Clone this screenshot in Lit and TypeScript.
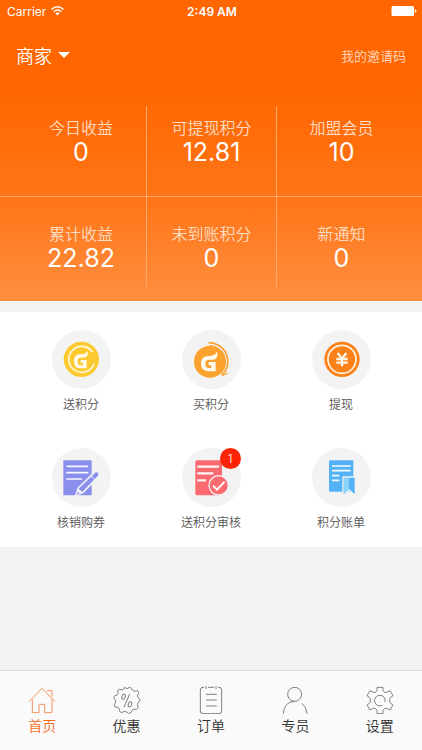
import { LitElement, html, svg, css, nothing, TemplateResult } from "lit";
import { customElement } from "lit/decorators.js";
import { classMap } from "lit/directives/class-map.js";

interface Stat { label: string; value: string; }
interface Action { label: string; box: string; art: TemplateResult; badge?: number; }
interface Tab { label: string; box: string; art: TemplateResult; active?: boolean; }

const STATS: Stat[][] = [
  [
    { label: "今日收益", value: "0" },
    { label: "可提现积分", value: "12.81" },
    { label: "加盟会员", value: "10" },
  ],
  [
    { label: "累计收益", value: "22.82" },
    { label: "未到账积分", value: "0" },
    { label: "新通知", value: "0" },
  ],
];

const ACTIONS: Action[] = [
  {
    label: "送积分",
    box: "35 30 177 177",
    art: svg`
      <circle cx="123" cy="118" r="53" fill="#fcc92f"/>
      <path d="M156 95A39 39 0 1 0 161 132" fill="none" stroke="#fff8dc" stroke-width="5" stroke-linecap="round"/>
      <path d="M101 123C101 108 109 103 122 103C132 103 137 100 141 93C145 106 139 113 128 113H121C114 113 112 117 112 124C112 132 115 136 121 136H128V129H121V120H139V145H120C107 145 101 137 101 123Z" fill="#fffbe8"/>`,
  },
  {
    label: "买积分",
    box: "35 30 177 177",
    art: svg`
      <circle cx="119" cy="125" r="48" fill="#fca22f"/>
      <path d="M115 68C151 70 175 95 172 130Q170 150 157 164" fill="none" stroke="#fca22f" stroke-width="5"/>
      <path d="M118 76C148 80 167 101 164 132Q162 146 155 156V167L173 160" fill="none" stroke="#fca22f" stroke-width="3"/>
      <path d="M92 130C92 114 101 108 117 108C128 108 135 104 140 95C144 111 137 119 125 119H117C108 119 105 123 105 131C105 140 108 144 116 144H123V136H115V126H136V154H116C100 154 92 146 92 130Z" fill="#fffaf0"/>`,
  },
  {
    label: "提现",
    box: "35 30 177 177",
    art: svg`
      <circle cx="125" cy="118" r="53" fill="#fb8118"/>
      <circle cx="125" cy="118" r="42" fill="none" stroke="#fff3e2" stroke-width="5"/>
      <path d="M112 99L125 116L138 99M108 117H142M108 128H142M125 115V139" fill="none" stroke="#fff6ea" stroke-width="7"/>`,
  },
  {
    label: "核销购券",
    box: "35 23 177 177",
    art: svg`
      <path d="M69 60H154V165H69Z" fill="#8a8fee"/>
      <path d="M80 78H142M80 97H142M80 116H123" stroke="#f8f8ff" stroke-width="5" stroke-linecap="round"/>
      <path d="M106 166L114 143L162 96Q169 91 175 96Q179 102 174 109L128 156Z" fill="#8a8fee" stroke="#f3f3f3" stroke-width="5" stroke-linejoin="round"/>
      <path d="M115 145L127 156L110 162Z" fill="#f3f3f3"/>
      <path d="M109 163L113 155L118 160Z" fill="#8a8fee"/>
      <path d="M152 107L164 119" stroke="#f3f3f3" stroke-width="3"/>`,
  },
  {
    label: "送积分审核",
    box: "35 23 177 177",
    badge: 1,
    art: svg`
      <rect x="75" y="60" width="80" height="105" rx="5" fill="#fa6a70"/>
      <path d="M81 79H146M81 99H129M81 120H107" stroke="#fff5f5" stroke-width="7"/>
      <circle cx="145" cy="135" r="29" fill="#fa6a70" stroke="#f3f3f3" stroke-width="4"/>
      <path d="M128 136L140 148L163 124" fill="none" stroke="#fff" stroke-width="6"/>`,
  },
  {
    label: "积分账单",
    box: "35 23 177 177",
    art: svg`
      <rect x="86" y="60" width="73" height="94" rx="3" fill="#54b2f6"/>
      <path d="M95 77H151M95 91H151M95 106H117M95 120H117" stroke="#f4fbff" stroke-width="5"/>
      <path d="M128 110H165V166L146 149L128 166Z" fill="#54b2f6" stroke="#f3f3f3" stroke-width="4"/>
      <path d="M131 113H146V146L131 160Z" fill="#8bd2fb"/>`,
  },
];

const TABS: Tab[] = [
  {
    label: "首页",
    box: "85 66 84 84",
    active: true,
    art: svg`<path d="M88 113L127 73L166 113M142 80H157V98M98 106V146H118V121H135V146H157V106"/>`,
  },
  {
    label: "优惠",
    box: "338 66 84 84",
    art: svg`
      <path d="M372 70Q380 78 387 70Q394 70 397 79Q402 84 412 80Q418 84 411 95Q411 101 419 106Q421 113 413 116Q409 120 414 131Q410 139 399 136Q394 138 391 147Q383 151 379 144Q373 139 363 146Q356 144 357 134Q354 129 344 129Q339 122 346 115Q348 109 340 101Q341 94 350 93Q355 90 352 79Q356 73 366 78Q371 77 372 70Z"/>
      <path d="M388 90L371 130"/>
      <ellipse cx="370" cy="98" rx="5" ry="8" transform="rotate(18 370 98)"/>
      <ellipse cx="389" cy="121" rx="5" ry="8" transform="rotate(18 389 121)"/>`,
  },
  {
    label: "订单",
    box: "591 66 84 84",
    art: svg`
      <path d="M612 70H609Q601 70 601 78V141Q601 149 609 149H657Q665 149 665 141V78Q665 70 657 70H654M624 70H642M618 66V75M648 66V75M618 91H650M618 108H650M618 126H650"/>`,
  },
  {
    label: "专员",
    box: "210 66 84 84",
    art: svg`<circle cx="251" cy="91" r="21"/><path d="M217 149Q219 113 251 112M273 118Q286 128 288 149"/>`,
  },
  {
    label: "设置",
    box: "464 66 84 84",
    art: svg`
      <path d="M497 70H515V79Q516 83 520 85Q524 87 528 84L536 80L545 95L538 100Q535 102 535 109Q535 116 538 118L545 123L536 138L528 134Q524 131 520 134Q516 136 515 140V149H497V140Q496 136 492 134Q488 131 484 134L476 138L467 123L474 118Q477 116 477 109Q477 102 474 100L467 95L476 80L484 84Q488 87 492 85Q496 83 497 79Z"/>
      <path d="M513 124A16 16 0 1 1 521 114"/>`,
  },
];

@customElement("app-root")
export class AppRoot extends LitElement {
  static styles = css`
    :host {
      display: flex;
      flex-direction: column;
      min-height: 100vh;
      background: #f3f3f3;
      color: #555;
      font-family: Inter, "Noto Sans CJK SC", sans-serif;
      font-size: 12px;
    }
    * { box-sizing: border-box; }
    button, a {
      border: 0;
      padding: 0;
      background: none;
      color: inherit;
      font: inherit;
      text-decoration: none;
      cursor: pointer;
    }
    svg { display: block; }
    .hero {
      padding-bottom: 14px;
      background: linear-gradient(#ff6600 28%, #ff7416 65%, #ff8f40);
      color: #fff;
    }
    .status {
      display: grid;
      grid-template-columns: 1fr auto 1fr;
      align-items: center;
      height: 22px;
      padding: 0 5px 0 7px;
    }
    .carrier { display: flex; align-items: center; gap: 5px; }
    .clock { font-weight: 600; }
    .battery { justify-self: end; }
    .topbar {
      display: flex;
      align-items: center;
      justify-content: space-between;
      height: 66px;
      padding: 0 16px;
      margin-bottom: 18px;
    }
    .role { display: flex; align-items: center; gap: 6px; font-size: 18px; font-weight: 350; }
    .invite { font-size: 13px; font-weight: 350; color: #ffdcc4; }
    .stats {
      display: grid;
      grid-template-columns: repeat(3, 1fr);
      padding: 0 16px;
    }
    .stats + .stats { border-top: 1px solid #ffa96e; }
    .stat {
      padding: 12px 0 30px;
      text-align: center;
    }
    .stats + .stats .stat { padding: 27px 0 15px; }
    .stat:not(:first-child) { border-left: 1px solid #ffa96e; }
    .stat-label { font-size: 16px; font-weight: 350; line-height: 20px; color: #ffdcc4; }
    .stat-value { font-size: 25px; line-height: 28px; }
    .actions {
      display: grid;
      grid-template-columns: repeat(3, 1fr);
      row-gap: 35px;
      margin-top: 11px;
      padding: 18px 16px 16px;
      background: #fff;
    }
    .action {
      display: flex;
      flex-direction: column;
      align-items: center;
      gap: 8px;
      font-weight: 350;
      line-height: 16px;
    }
    .disc {
      position: relative;
      width: 59px;
      height: 59px;
      border-radius: 50%;
      background: #f3f3f3;
    }
    .badge {
      position: absolute;
      top: 0;
      right: 0;
      width: 21px;
      border-radius: 50%;
      background: #fd2406;
      color: #fff;
      line-height: 21px;
      text-align: center;
    }
    .tabs {
      display: grid;
      grid-template-columns: repeat(5, 1fr);
      margin-top: auto;
      border-top: 1px solid #dcdcdc;
      background: #fafafa;
    }
    .tab {
      display: flex;
      flex-direction: column;
      align-items: center;
      gap: 2px;
      padding: 15px 0 14px;
      color: #333;
      font-size: 14px;
      font-weight: 350;
      line-height: 20px;
    }
    .tab svg {
      fill: none;
      stroke: #808080;
      stroke-width: 3;
    }
    .tab.active { color: #f76b1c; }
    .tab.active svg { stroke: #f6935c; }
  `;

  private renderStat(stat: Stat) {
    return html`<div class="stat">
      <div class="stat-label">${stat.label}</div>
      <div class="stat-value">${stat.value}</div>
    </div>`;
  }

  private renderAction(action: Action) {
    return html`<button class="action" type="button">
      <span class="disc">
        <svg width="59" height="59" viewBox=${action.box} aria-hidden="true">${action.art}</svg>
        ${action.badge ? html`<span class="badge">${action.badge}</span>` : nothing}
      </span>
      <span>${action.label}</span>
    </button>`;
  }

  private renderTab(tab: Tab) {
    return html`<a class=${classMap({ tab: true, active: !!tab.active })} href="#">
      <svg width="28" height="28" viewBox=${tab.box} aria-hidden="true">${tab.art}</svg>
      <span>${tab.label}</span>
    </a>`;
  }

  render() {
    return html`
      <header class="hero">
        <div class="status">
          <span class="carrier">Carrier
            <svg width="13" height="10" viewBox="0 0 13 10" fill="none" stroke="#fff" stroke-width="1.5" aria-hidden="true">
              <path d="M0.6 3.4Q6.5 -1.8 12.4 3.4M2.7 5.7Q6.5 2.3 10.3 5.7"/>
              <path d="M4.3 7.3Q6.5 5.4 8.7 7.3L6.5 9.6Z" fill="#fff" stroke="none"/>
            </svg>
          </span>
          <span class="clock">2:49 AM</span>
          <svg class="battery" width="26" height="10" viewBox="0 0 26 10" fill="#fff" aria-hidden="true">
            <rect x="0.5" width="22.5" height="10" rx="1.5"/>
            <path d="M23.8 3.2Q25.6 3.6 25.6 5Q25.6 6.4 23.8 6.8Z"/>
          </svg>
        </div>
        <div class="topbar">
          <button class="role" type="button">商家
            <svg width="12" height="6" viewBox="0 0 12 6" fill="#fff" aria-hidden="true"><path d="M0 0H12L6 6Z"/></svg>
          </button>
          <a class="invite" href="#">我的邀请码</a>
        </div>
        ${STATS.map((row) => html`<div class="stats">${row.map((s) => this.renderStat(s))}</div>`)}
      </header>
      <main class="actions">${ACTIONS.map((a) => this.renderAction(a))}</main>
      <nav class="tabs">${TABS.map((t) => this.renderTab(t))}</nav>
    `;
  }
}
